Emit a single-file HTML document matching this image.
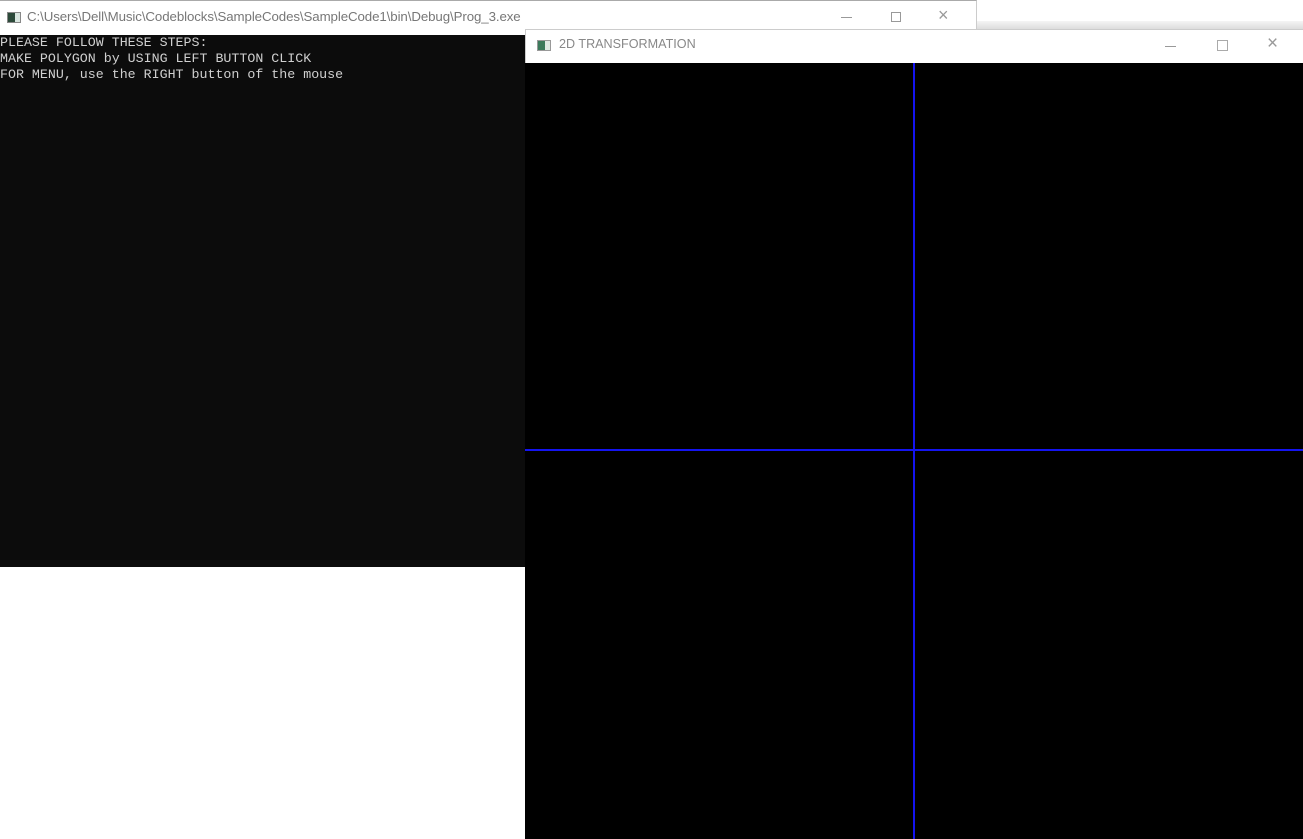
<!DOCTYPE html>
<html><head><style>
html,body{margin:0;padding:0;width:1303px;height:839px;background:#fff;overflow:hidden;position:relative;font-family:"Segoe UI","Liberation Sans",sans-serif}
.abs{position:absolute}
.ttl{color:#333;}
</style></head><body>
<div class="abs" style="left:977px;top:21px;width:326px;height:8px;background:linear-gradient(#f4f4f4,#dcdcdc);border-bottom:1px solid #bbb"></div>
<div class="abs" style="left:0;top:0;width:977px;height:35px;background:#fff;border-top:1px solid #aaa;border-right:1px solid #ccc;box-sizing:border-box"></div>
<div class="abs" style="left:7px;top:12px;width:14px;height:11px;border:1px solid #888;background:linear-gradient(90deg,#2c4a3a 0 60%,#d9e6e0 60%);box-sizing:border-box"></div>
<div class="abs ttl" style="left:27px;top:9px;color:#777;font-size:13.3px;letter-spacing:-0.1px">C:\Users\Dell\Music\Codeblocks\SampleCodes\SampleCode1\bin\Debug\Prog_3.exe</div>
<div class="abs" style="left:841px;top:17px;width:11px;height:1px;background:#999"></div>
<div class="abs" style="left:891px;top:12px;width:10px;height:10px;border:1px solid #999;box-sizing:border-box"></div>
<div class="abs" style="left:938px;top:5px;color:#999;font-size:18px;font-weight:200">×</div>
<div class="abs" style="left:0;top:35px;width:525px;height:532px;background:#0c0c0c"></div>
<pre class="abs" style="left:0;top:35px;margin:0;font-family:'Liberation Mono','DejaVu Sans Mono',monospace;font-size:13.3px;line-height:16px;color:#d0d0d0">PLEASE FOLLOW THESE STEPS:
MAKE POLYGON by USING LEFT BUTTON CLICK
FOR MENU, use the RIGHT button of the mouse</pre>
<div class="abs" style="left:525px;top:29px;width:778px;height:34px;background:#fff;border-top:1px solid #ccc;border-left:1px solid #ccc;box-sizing:border-box"></div>
<div class="abs" style="left:537px;top:40px;width:14px;height:11px;border:1px solid #999;background:linear-gradient(90deg,#3d7a5c 0 60%,#dfe9e4 60%);box-sizing:border-box"></div>
<div class="abs ttl" style="left:559px;top:37px;color:#888;font-size:12.6px">2D TRANSFORMATION</div>
<div class="abs" style="left:1165px;top:46px;width:11px;height:1px;background:#999"></div>
<div class="abs" style="left:1217px;top:40px;width:11px;height:11px;border:1px solid #aaa;box-sizing:border-box"></div>
<div class="abs" style="left:1267px;top:33px;color:#999;font-size:19px;font-weight:200">×</div>
<div class="abs" style="left:525px;top:63px;width:778px;height:776px;background:#000"></div>
<div class="abs" style="left:913px;top:63px;width:2px;height:776px;background:#1414f0"></div>
<div class="abs" style="left:525px;top:449px;width:778px;height:2px;background:#1414f0"></div>
</body></html>
